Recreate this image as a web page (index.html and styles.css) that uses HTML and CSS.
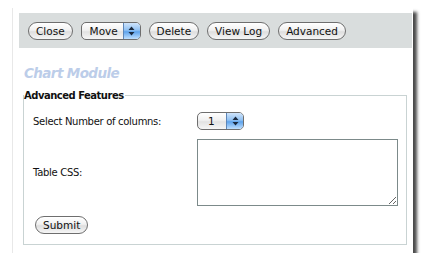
FILE: index.html
```html
<!DOCTYPE html>
<html lang="en">
<head>
  <meta charset="UTF-8" />
  <title>Chart Module</title>
  <link rel="stylesheet" href="styles.css">
</head>
<body>
  <div class="window">
    <div class="toolbar">
      <button class="pill">Close</button>
      <div class="popup popup-move">
        <span class="popup-label">Move</span>
        <span class="popup-arrows">
          <svg width="7" height="10" viewBox="0 0 7 10"><path d="M3.5 0.5 L6.5 4 L0.5 4 Z M0.5 6 L6.5 6 L3.5 9.5 Z" fill="#1a2a40"/></svg>
        </span>
      </div>
      <button class="pill">Delete</button>
      <button class="pill">View Log</button>
      <button class="pill">Advanced</button>
    </div>

    <h1 class="module-title">Chart Module</h1>

    <fieldset class="features">
      <legend>Advanced Features</legend>
      <div class="form-grid">
        <label class="row-label">Select Number of columns:</label>
        <div class="popup popup-cols">
          <span class="popup-label">1</span>
          <span class="popup-arrows">
            <svg width="7" height="10" viewBox="0 0 7 10"><path d="M3.5 0.5 L6.5 4 L0.5 4 Z M0.5 6 L6.5 6 L3.5 9.5 Z" fill="#1a2a40"/></svg>
          </span>
        </div>
        <label class="row-label">Table CSS:</label>
        <textarea class="css-box"></textarea>
      </div>
      <button class="pill submit">Submit</button>
    </fieldset>
  </div>
</body>
</html>
```

FILE: styles.css
```css
html, body {
  margin: 0;
  padding: 0;
  background: #fff;
  font-family: 'DejaVu Sans', Verdana, sans-serif;
  color: #111;
}

.window {
  margin: 8px 0 0 12px;
  width: 401px;
  height: 245px;
  box-sizing: border-box;
  padding: 5px 1px 0 6px;
  background: #fff;
  border-left: 1px solid #e8e8e8;
  box-shadow: 4px 4px 3px rgba(30, 30, 30, 0.8);
}

.toolbar {
  height: 35px;
  background: #d9dddd;
  display: flex;
  align-items: center;
  gap: 8px;
  padding-left: 9px;
}

.pill {
  font-family: 'DejaVu Sans', Verdana, sans-serif;
  font-size: 10.5px;
  color: #111;
  height: 18px;
  padding: 0 7px;
  border: 1px solid #6e6e6e;
  border-radius: 9px;
  background: linear-gradient(#ffffff, #f1f1f1 45%, #dedede 55%, #f6f6f6);
  box-shadow: inset 0 1px 1px rgba(255, 255, 255, 0.9);
  line-height: 16px;
}

.popup {
  display: flex;
  height: 18px;
  box-sizing: border-box;
  border: 1px solid #6e6e6e;
  border-radius: 5px;
  overflow: hidden;
  background: linear-gradient(#ffffff, #f1f1f1 45%, #e2e2e2 55%, #f6f6f6);
  font-size: 10.5px;
  line-height: 16px;
}

.popup-label {
  flex: 1;
  padding-left: 8px;
}

.popup-arrows {
  width: 16px;
  display: flex;
  align-items: center;
  justify-content: center;
  border-left: 1px solid #5d86b8;
  background: linear-gradient(#cfe4fb, #8fc0f2 45%, #5ea3ec 55%, #bfe0ff);
}

.popup-move {
  width: 60px;
}

.module-title {
  margin: 16px 0 0 5px;
  font-size: 13.5px;
  letter-spacing: -0.6px;
  font-style: italic;
  font-weight: bold;
  color: #bccde9;
  line-height: 18px;
}

.features {
  margin: 8px 6px 0 4px;
  padding: 11px 8px 10px 9px;
  border: 1px solid #c9d3d3;
  height: 155px;
  box-sizing: border-box;
}

.features legend {
  font-size: 10px;
  letter-spacing: -0.5px;
  font-weight: bold;
  padding: 0 1px 0 0;
  margin-left: -9px;
}

.form-grid {
  display: grid;
  grid-template-columns: 164px 201px;
  row-gap: 9px;
  align-items: center;
}

.row-label {
  font-size: 10px;
  letter-spacing: -0.3px;
}

.popup-cols {
  width: 47px;
}

.popup-cols .popup-label {
  padding-left: 10px;
}

.css-box {
  width: 201px;
  height: 67px;
  box-sizing: border-box;
  border: 1px solid #7c8a8a;
  margin: 0;
  resize: both;
}

.submit {
  margin-top: 10px;
  margin-left: 2px;
}
```
